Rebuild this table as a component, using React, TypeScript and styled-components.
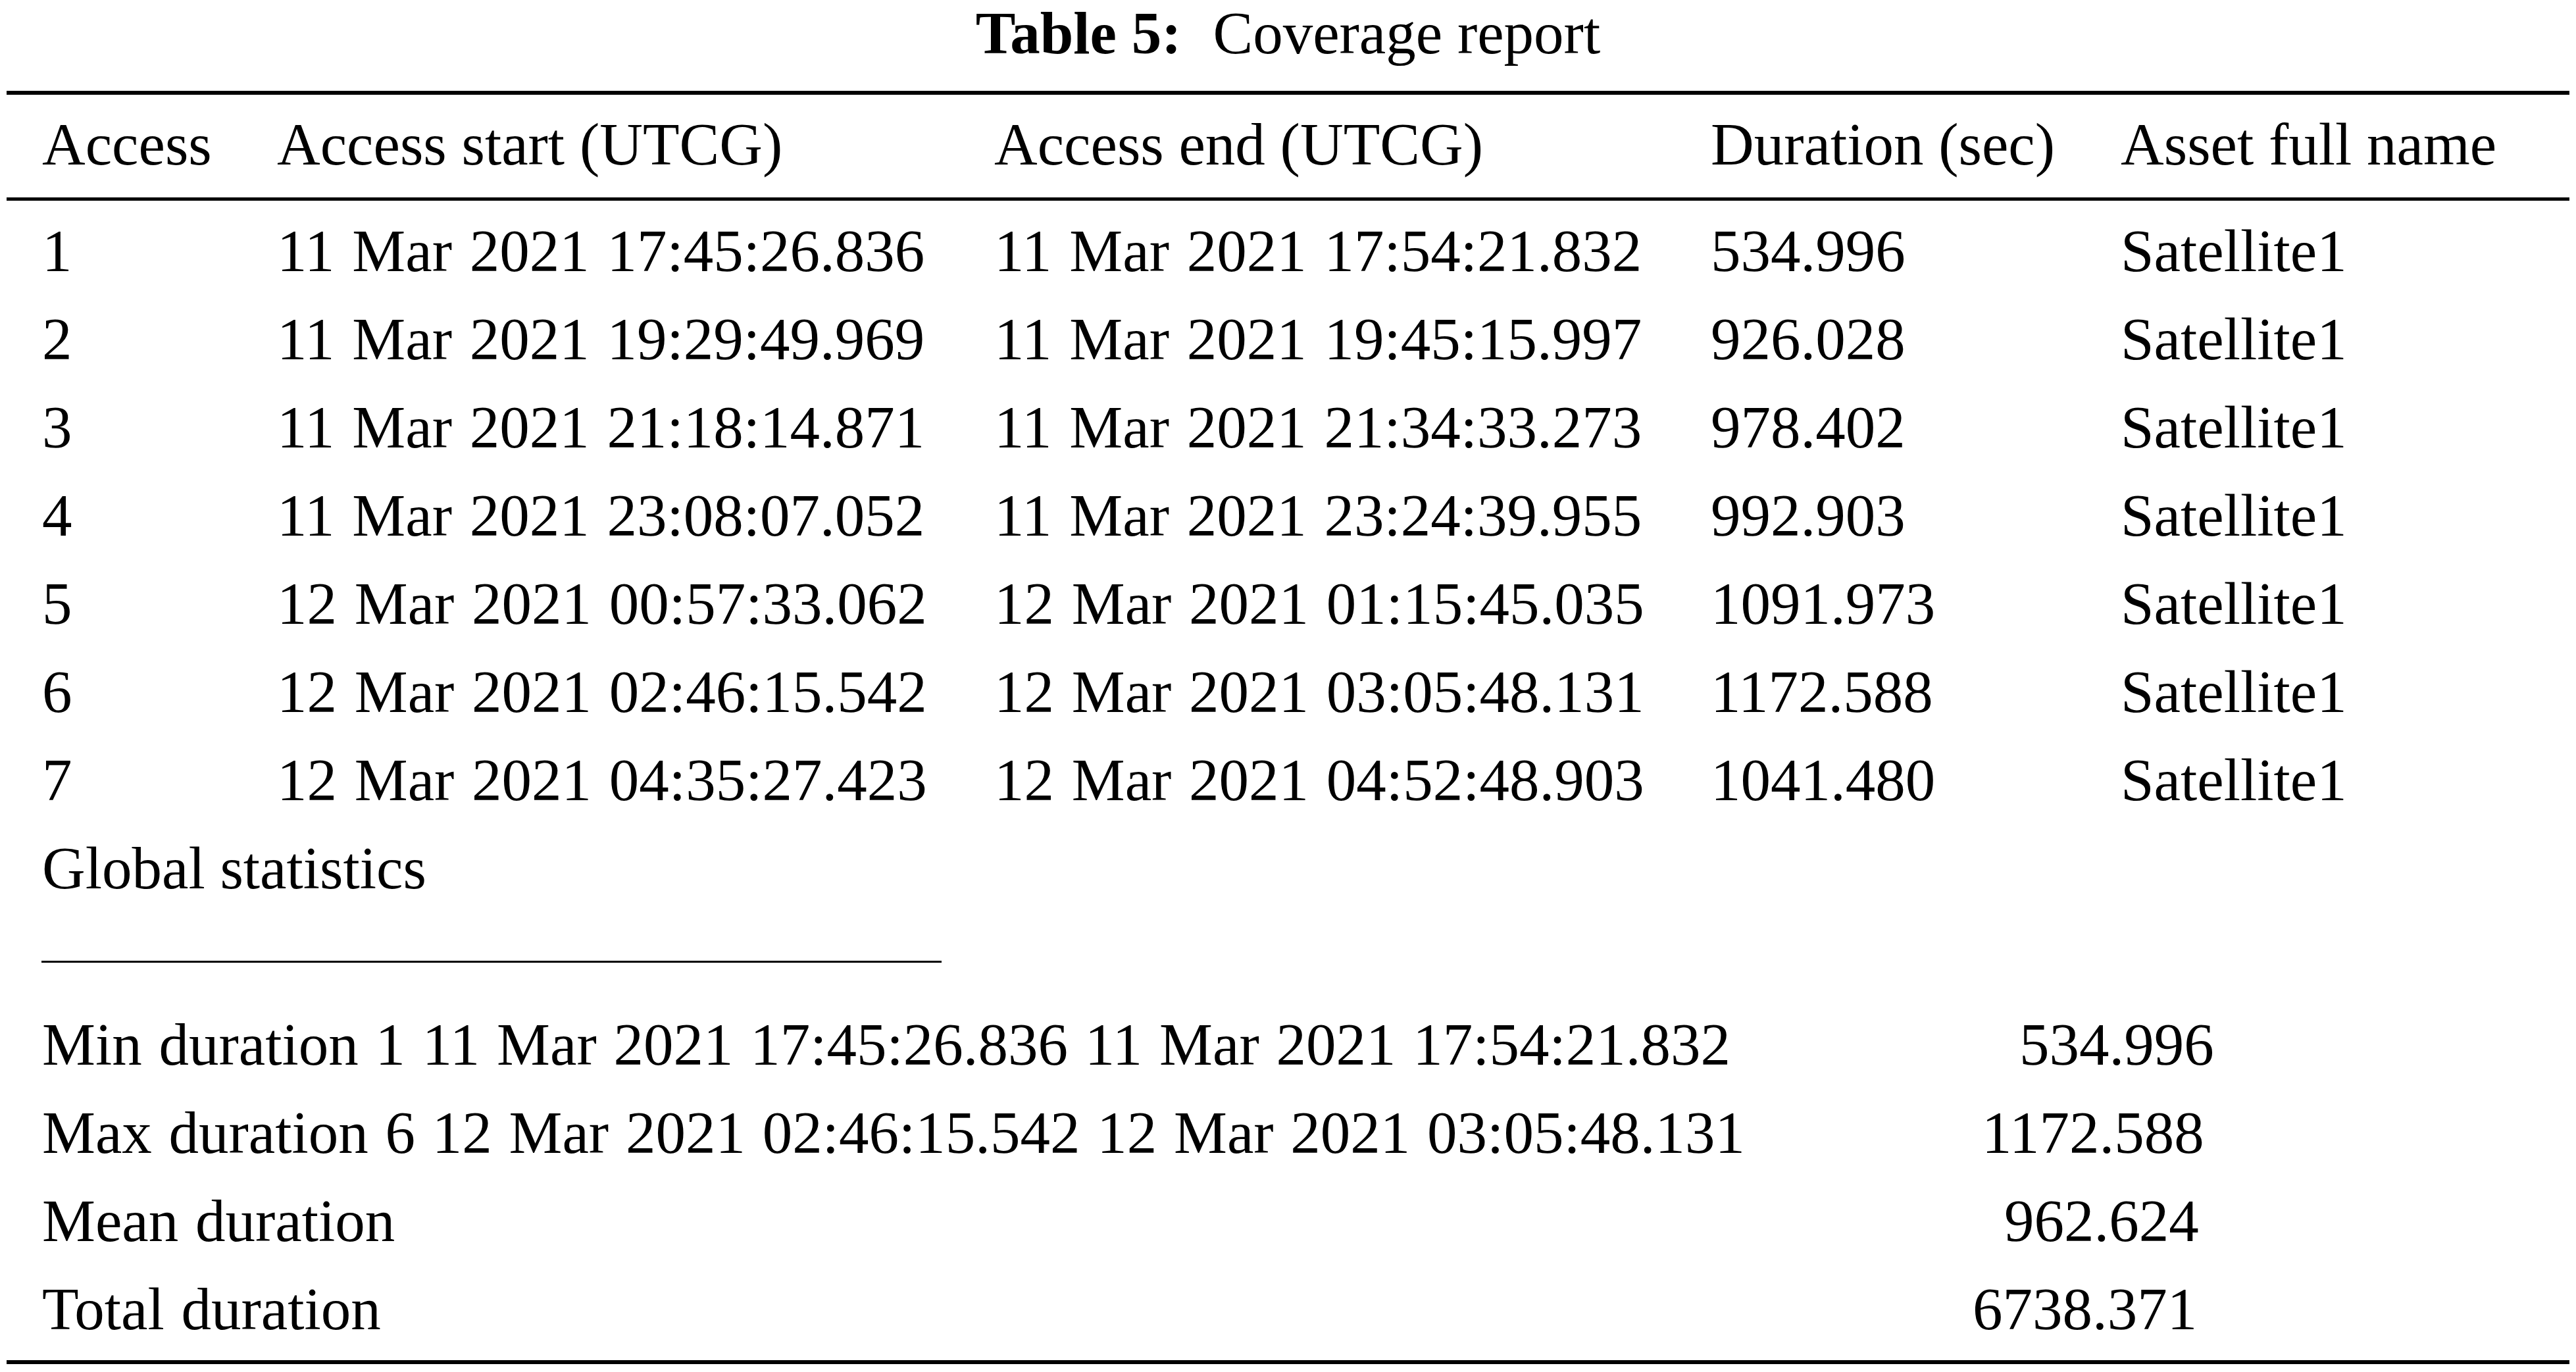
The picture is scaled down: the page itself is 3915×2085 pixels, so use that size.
import React from "react";
import styled, { createGlobalStyle } from "styled-components";

const GlobalStyle = createGlobalStyle`
  html, body {
    margin: 0;
    padding: 0;
    background: #ffffff;
  }
  body {
    font-family: "Liberation Serif", "Times New Roman", serif;
    color: #000000;
  }
`;

const Page = styled.div`
  width: 3915px;
  padding: 0 10px;
  box-sizing: border-box;
`;

const TableBox = styled.div`
  width: 3895px;
  font-size: 91px;
`;

const Caption = styled.div`
  text-align: center;
  line-height: 102px;
  white-space: nowrap;
  margin-bottom: 36px;
`;

const CaptionLabel = styled.span`
  font-weight: bold;
  margin-right: 48px;
`;

const Rule = styled.div<{ $thick: number }>`
  height: ${(p) => p.$thick}px;
  background: #000000;
`;

const GRID = "357px 1090px 1089px 623px 1fr";

const HeaderRow = styled.div`
  display: grid;
  grid-template-columns: ${GRID};
  padding: 9px 0 13px 54px;
  line-height: 134px;
`;

const Body = styled.div`
  padding-top: 10px;
`;

const DataRow = styled.div`
  display: grid;
  grid-template-columns: ${GRID};
  padding-left: 54px;
  line-height: 134px;
  height: 134px;
  word-spacing: 4px;
`;

const Cell = styled.div`
  white-space: nowrap;
`;

const NoteRow = styled.div`
  padding-left: 54px;
  line-height: 134px;
  height: 134px;
  white-space: nowrap;
`;

const ShortRuleRow = styled.div`
  height: 134px;
  padding-left: 53px;
  box-sizing: border-box;
  padding-top: 73px;
`;

const ShortRule = styled.div`
  width: 1368px;
  height: 3px;
  background: #000000;
`;

const StatRow = styled.div`
  display: grid;
  grid-template-columns: 2934px 1fr;
  padding-left: 54px;
  line-height: 134px;
  height: 134px;
`;

const StatLabel = styled.div`
  white-space: nowrap;
  word-spacing: 3px;
`;

const StatValue = styled.div<{ $offset: number }>`
  padding-left: ${(p) => p.$offset}px;
  white-space: nowrap;
`;

const BottomRule = styled(Rule)`
  margin-top: 10px;
`;

const header = [
  "Access",
  "Access start (UTCG)",
  "Access end (UTCG)",
  "Duration (sec)",
  "Asset full name",
];

const rows: string[][] = [
  ["1", "11 Mar 2021 17:45:26.836", "11 Mar 2021 17:54:21.832", "534.996", "Satellite1"],
  ["2", "11 Mar 2021 19:29:49.969", "11 Mar 2021 19:45:15.997", "926.028", "Satellite1"],
  ["3", "11 Mar 2021 21:18:14.871", "11 Mar 2021 21:34:33.273", "978.402", "Satellite1"],
  ["4", "11 Mar 2021 23:08:07.052", "11 Mar 2021 23:24:39.955", "992.903", "Satellite1"],
  ["5", "12 Mar 2021 00:57:33.062", "12 Mar 2021 01:15:45.035", "1091.973", "Satellite1"],
  ["6", "12 Mar 2021 02:46:15.542", "12 Mar 2021 03:05:48.131", "1172.588", "Satellite1"],
  ["7", "12 Mar 2021 04:35:27.423", "12 Mar 2021 04:52:48.903", "1041.480", "Satellite1"],
];

const stats: { label: string; value: string; offset: number }[] = [
  {
    label: "Min duration 1 11 Mar 2021 17:45:26.836 11 Mar 2021 17:54:21.832",
    value: "534.996",
    offset: 71,
  },
  {
    label: "Max duration 6 12 Mar 2021 02:46:15.542 12 Mar 2021 03:05:48.131",
    value: "1172.588",
    offset: 14,
  },
  { label: "Mean duration", value: "962.624", offset: 48 },
  { label: "Total duration", value: "6738.371", offset: 0 },
];

export default function App() {
  return (
    <>
      <GlobalStyle />
      <Page>
        <TableBox>
          <Caption>
            <CaptionLabel>Table 5:</CaptionLabel>
            Coverage report
          </Caption>
          <Rule $thick={6} />
          <HeaderRow>
            {header.map((h) => (
              <Cell key={h}>{h}</Cell>
            ))}
          </HeaderRow>
          <Rule $thick={5} />
          <Body>
            {rows.map((r) => (
              <DataRow key={r[0]}>
                {r.map((c, i) => (
                  <Cell key={i}>{c}</Cell>
                ))}
              </DataRow>
            ))}
            <NoteRow>Global statistics</NoteRow>
            <ShortRuleRow>
              <ShortRule />
            </ShortRuleRow>
            {stats.map((s) => (
              <StatRow key={s.label}>
                <StatLabel>{s.label}</StatLabel>
                <StatValue $offset={s.offset}>{s.value}</StatValue>
              </StatRow>
            ))}
          </Body>
          <BottomRule $thick={6} />
        </TableBox>
      </Page>
    </>
  );
}
